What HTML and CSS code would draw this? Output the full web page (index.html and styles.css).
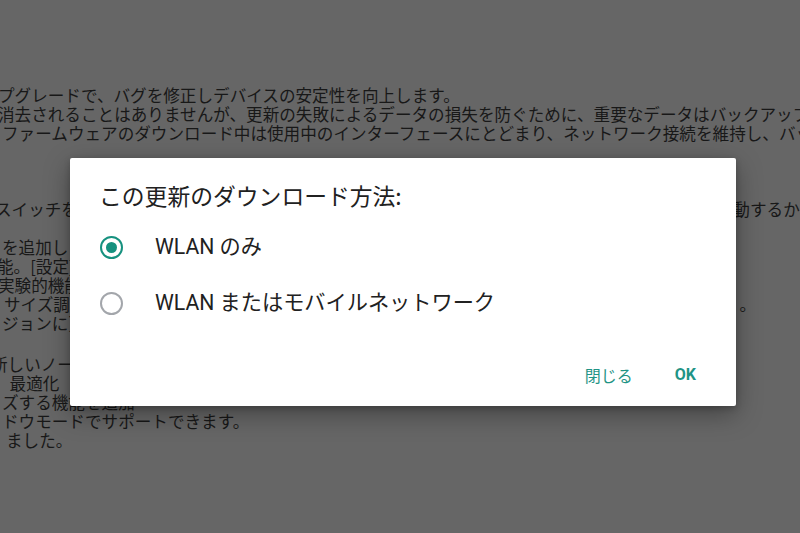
FILE: index.html
```html
<!DOCTYPE html>
<html lang="ja">
<head>
<meta charset="utf-8">
<title>更新</title>
<link rel="stylesheet" href="styles.css">
</head>
<body>
<div class="page">
  <div class="text">
    <div class="line cut2">プグレードで、バグを修正しデバイスの安定性を向上します。</div>
    <div class="line cut2">消去されることはありませんが、更新の失敗によるデータの損失を防ぐために、重要なデータはバックアップしてください。</div>
    <div class="line in2">ファームウェアのダウンロード中は使用中のインターフェースにとどまり、ネットワーク接続を維持し、バッテリー残量を確認してください。</div>
    <div class="blank"></div>
    <div class="blank"></div>
    <div class="blank"></div>
    <div class="line split cut5"><span>スイッチを押して自動更新を有効にし、夜間に自動的に更新</span><span class="tail">動するか、</span></div>
    <div class="blank"></div>
    <div class="line in2">を追加しました。</div>
    <div class="line cut3">能。[設定]から変更できます。</div>
    <div class="line cut2">実験的機能を追加しました。</div>
    <div class="line split in4"><span>サイズ調整の機能を改善しました</span><span class="endmark">。</span></div>
    <div class="line in2">ジョンに更新しました。</div>
    <div class="blank gap"></div>
    <div class="line cut9">新しいノート機能</div>
    <div class="line cut7">、最適化</div>
    <div class="line in2">ズする機能を追加</div>
    <div class="line in2">ドウモードでサポートできます。</div>
    <div class="line in6">ました。</div>
  </div>

  <div class="dialog">
    <div class="title">この更新のダウンロード方法:</div>
    <div class="option">
      <span class="radio checked"><span class="dot"></span></span>
      <span class="label">WLAN のみ</span>
    </div>
    <div class="option">
      <span class="radio"></span>
      <span class="label">WLAN またはモバイルネットワーク</span>
    </div>
    <div class="actions">
      <span class="btn">閉じる</span>
      <span class="btn bold">OK</span>
    </div>
  </div>
</div>
</body>
</html>
```

FILE: styles.css
```css
html, body {
  margin: 0;
  padding: 0;
  width: 800px;
  height: 533px;
  overflow: hidden;
  background: #666666;
}
.page {
  position: relative;
  width: 800px;
  height: 533px;
  font-family: "Noto Sans CJK JP", "Noto Sans", sans-serif;
}
.text {
  padding-top: 86px;
  color: #181818;
  font-size: 16.6px;
  line-height: 19px;
}
.line {
  white-space: nowrap;
  overflow: hidden;
  height: 19px;
}
.blank { height: 19px; }
.blank.gap { height: 22px; }
.split {
  display: flex;
  justify-content: space-between;
}
.split > span:first-child { margin-left: var(--cut, 0); }
.tail { margin-right: -16px; flex: none; }
.endmark { padding-right: 44px; flex: none; }
.in2 { padding-left: 2px; }
.in4 { padding-left: 4px; }
.in6 { padding-left: 6px; }
.cut2 { text-indent: -2px; }
.cut3 { text-indent: -3px; }
.cut5 > span:first-child { margin-left: -5px; }
.cut9 { text-indent: -9px; }
.cut7 { text-indent: -7px; }

.dialog {
  position: absolute;
  left: 70px;
  top: 158px;
  width: 666px;
  height: 248px;
  box-sizing: border-box;
  background: #ffffff;
  border-radius: 2px;
  box-shadow: 0 8px 26px rgba(0,0,0,0.35), 0 2px 6px rgba(0,0,0,0.2);
  padding-top: 23px;
  font-family: Roboto, "Noto Sans CJK JP", sans-serif;
  color: #212121;
}
.title {
  padding-left: 29px;
  font-size: 22.8px;
  line-height: 30px;
  height: 30px;
  margin-bottom: 8px;
  font-family: "Noto Sans CJK JP", Roboto, sans-serif;
}
.option {
  height: 56px;
  display: flex;
  align-items: center;
  padding-left: 30px;
}
.radio {
  width: 23px;
  height: 23px;
  box-sizing: border-box;
  border-radius: 50%;
  border: 2.5px solid #a3a6ab;
  display: flex;
  align-items: center;
  justify-content: center;
  flex: none;
}
.radio.checked { border-color: #16917f; }
.dot {
  width: 11px;
  height: 11px;
  border-radius: 50%;
  background: #16917f;
}
.label {
  margin-left: 32px;
  font-size: 21.2px;
  line-height: 28px;
}
.actions {
  display: flex;
  justify-content: flex-end;
  gap: 10px;
  padding-right: 24px;
  margin-top: 26px;
}
.btn {
  height: 36px;
  line-height: 36px;
  padding: 0 16px;
  font-size: 16px;
  color: #1f9485;
  font-family: "Noto Sans CJK JP", Roboto, sans-serif;
}
.btn.bold {
  font-family: Roboto, sans-serif;
  font-weight: 700;
}
```
